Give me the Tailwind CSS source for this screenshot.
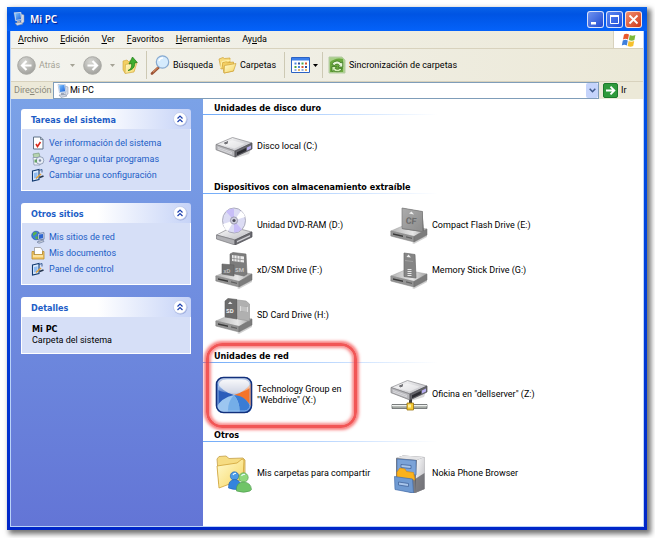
<!DOCTYPE html>
<html lang="es">
  <head>
    <meta charset="UTF-8" />
    <meta name="viewport" content="width=device-width, initial-scale=1.0" />
    <title>Mi PC</title>
    <script src="https://cdn.jsdelivr.net/npm/@tailwindcss/browser@4"></script>
  </head>
  <body class="bg-white font-['Roboto','Liberation_Sans',sans-serif] text-[9px] leading-[11px] text-black">
    <!-- Shared gradients and shapes -->
    <svg class="absolute" width="0" height="0" aria-hidden="true">
      <defs>
        <linearGradient id="metal" x1="0" y1="0" x2="1" y2="1">
          <stop offset="0" stop-color="#ffffff" />
          <stop offset="1" stop-color="#b8b8be" />
        </linearGradient>
        <linearGradient id="steel" x1="0" y1="0" x2="1" y2="0">
          <stop offset="0" stop-color="#b4b4b4" />
          <stop offset=".6" stop-color="#e6e6e6" />
          <stop offset="1" stop-color="#a0a0a0" />
        </linearGradient>
        <linearGradient id="card" x1="0" y1="0" x2="1" y2="1">
          <stop offset="0" stop-color="#acacac" />
          <stop offset="1" stop-color="#8c8c8c" />
        </linearGradient>
        <linearGradient id="folder" x1="0" y1="0" x2="1" y2="1">
          <stop offset="0" stop-color="#fffbd0" />
          <stop offset="1" stop-color="#f7d560" />
        </linearGradient>
        <linearGradient id="screen" x1="0" y1="0" x2="1" y2="1">
          <stop offset="0" stop-color="#7fc4ff" />
          <stop offset="1" stop-color="#1c62d8" />
        </linearGradient>
        <radialGradient id="grayball" cx=".4" cy=".3" r=".8">
          <stop offset="0" stop-color="#d8d8d4" />
          <stop offset="1" stop-color="#9b9b97" />
        </radialGradient>
        <symbol id="computer" viewBox="0 0 14 14">
          <path d="M9 2l3 1v7l-3 2z" fill="#d8dde8" stroke="#8a92a8" stroke-width=".5" />
          <path d="M2 .5L9 0l1 8-6.500 1z" fill="#e8f1fb" stroke="#8fa6c8" stroke-width=".5" />
          <path d="M3 1.300l5.400-.4.700 6.300-5 .8z" fill="url(#screen)" />
          <path d="M5 9h3l1 2H5z" fill="#9ca6ba" />
          <path d="M3 11l6-.5 2 1.500-6 1.500z" fill="#d5dbe6" stroke="#7b869c" stroke-width=".5" />
        </symbol>
        <symbol id="harddisk" viewBox="0 0 38 22">
          <path d="M3 14l18 7 15-8-2 5-13 4z" fill="#000" opacity=".15" />
          <path d="M1 8.500L17.500 1.500 37 7 20 15z" fill="url(#metal)" stroke="#88888c" stroke-width=".7" />
          <path d="M1 8.500v5.200L20 21v-6z" fill="#b8b8bc" stroke="#7c7c80" stroke-width=".7" />
          <path d="M20 15v6l17-8V7z" fill="#66666c" stroke="#4c4c52" stroke-width=".7" />
          <path d="M22 16.200v3l9-4.200v-3z" fill="#2c2c32" />
          <path d="M32 11.400v3.200l4-2V9.500z" fill="#b8aef2" />
          <path d="M6 8.800l11-4.600 13 3.600-10.500 4.600z" fill="#fff" opacity=".45" />
          <path d="M9 7.300l4-1.700M10 8l3-1.300" stroke="#44444a" stroke-width=".9" />
          <path d="M3 11.500l14 5M3 13l14 5" stroke="#ededf0" stroke-width=".6" />
        </symbol>
        <symbol id="reader" viewBox="0 0 38 20">
          <path d="M22 19l15-8v2l-13 7z" fill="#000" opacity=".18" />
          <path d="M.8 7L15 1l22 4-13 7.500z" fill="url(#steel)" stroke="#a0a0a0" stroke-width=".5" />
          <path d="M.8 7v5L24 18v-5.500z" fill="#949494" stroke="#7c7c7c" stroke-width=".5" />
          <path d="M24 12.500V18l13-7V5z" fill="#7c7c7c" stroke="#6a6a6a" stroke-width=".5" />
          <path d="M3 9.200l10 2.300v1.600L3 10.800z" fill="#3a3a3a" />
          <path d="M16 12.300l6 1.400v1.200l-6-1.400z" fill="#606060" />
        </symbol>
        <symbol id="panelicon" viewBox="0 0 14 14">
          <path d="M1.500 3L8 1.500v10L1.500 13z" fill="#dcecff" stroke="#123a70" stroke-width="1.100" />
          <path d="M3 5l3.500-.7v5.500L3 10.600z" fill="#8fbcf2" />
          <path d="M8 2.500l3-1v3" fill="none" stroke="#3b5f94" />
          <path d="M5 10.500L10 6" stroke="#e3a43b" stroke-width="1.500" />
          <path d="M8.500 9.500l4-1.500" stroke="#27374f" stroke-width="1.800" />
        </symbol>
        <symbol id="chevrons" viewBox="0 0 16 16">
          <circle cx="8.500" cy="8.600" r="7" fill="#6a7fc0" opacity=".45" />
          <circle cx="8" cy="8" r="6.500" fill="#fff" stroke="#c3cdea" stroke-width=".7" />
          <path d="M5.500 7.500L8 5l2.500 2.500M5.500 11L8 8.500l2.500 2.500" fill="none" stroke="#1b3fae" stroke-width="1.200" />
        </symbol>
        <symbol id="caret" viewBox="0 0 5 3">
          <path d="M0 0h5L2.500 3z" fill="currentColor" />
        </symbol>
      </defs>
    </svg>

    <div class="flex min-h-screen pt-[7px] pr-2 pb-2 pl-[7px]">
      <div class="flex flex-1 flex-col bg-linear-to-b from-[#0058ee] to-[#0026c8] shadow-[3px_3px_5px_1px_rgba(0,0,0,0.55)]">
        <!-- Title bar -->
        <header class="flex h-6 items-center gap-1 bg-linear-to-b from-[#0b62e8] from-0% via-[#0054e3] via-30% to-[#0462fa] px-[5px]">
          <svg class="size-3.5"><use href="#computer" /></svg>
          <h1 class="flex-1 font-['Noto_Sans'] text-[10px] leading-4 font-semibold text-white [text-shadow:1px_1px_1px_#0a1883]">Mi PC</h1>
          <div class="flex gap-0.5">
            <button aria-label="Minimizar" class="flex size-[17px] items-center justify-center rounded-[3px] border border-white/80 bg-linear-to-br from-[#6f92f0] to-[#2147cf]">
              <svg class="size-[15px]" viewBox="0 0 15 15"><path d="M3 10h5v2.500H3z" fill="#fff" /></svg>
            </button>
            <button aria-label="Maximizar" class="flex size-[17px] items-center justify-center rounded-[3px] border border-white/80 bg-linear-to-br from-[#5d87f0] to-[#1d4ad8]">
              <svg class="size-[15px]" viewBox="0 0 15 15"><path d="M3.500 4.500h8v7h-8z" fill="none" stroke="#fff" /><path d="M3 3h9v2H3z" fill="#fff" /></svg>
            </button>
            <button aria-label="Cerrar" class="flex size-[17px] items-center justify-center rounded-[3px] border border-white/80 bg-linear-to-br from-[#f08c6c] to-[#cf3310]">
              <svg class="size-[15px]" viewBox="0 0 15 15"><path d="M3.500 3.500l8 8M11.500 3.500l-8 8" stroke="#fff" stroke-width="1.800" /></svg>
            </button>
          </div>
        </header>

        <div class="mx-[3px] mb-[3px] flex flex-1 flex-col border border-t-0 border-[#b9d2f8] bg-white">
          <!-- Menu bar -->
          <nav class="flex h-[18px] border-b border-[#d8d2bd] bg-linear-to-r from-[#f3f3ee] to-[#ece9d8] pl-px">
            <div class="flex flex-1 items-center">
              <button class="px-1.5"><u>A</u>rchivo</button>
              <button class="px-1.5"><u>E</u>dición</button>
              <button class="px-1.5"><u>V</u>er</button>
              <button class="px-1.5"><u>F</u>avoritos</button>
              <button class="px-1.5"><u>H</u>erramientas</button>
              <button class="px-1.5">Ay<u>u</u>da</button>
            </div>
            <div class="flex w-[30px] items-center justify-center border-l border-[#d8d2bd] bg-white">
              <svg class="size-4" viewBox="0 0 16 16">
                <path d="M3 2.500q2.500-1.500 5 0L7 7.500q-2.500-1.300-5 0z" fill="#e8582c" />
                <path d="M8.800 3q2.700 1.300 5.600 0l-1 5q-2.700 1.300-5.600 0z" fill="#7db83a" />
                <path d="M1.800 8.500q2.500-1.300 5 0l-1 5q-2.500-1.500-5 0z" fill="#3f7fdd" />
                <path d="M7.600 9q2.700 1.300 5.600 0l-1 5q-2.700 1.300-5.600 0z" fill="#f6c02c" />
              </svg>
            </div>
          </nav>

          <!-- Toolbar -->
          <div class="flex h-[33px] items-center border-b border-[#d8d2bd] bg-linear-to-r from-[#f3f3ee] to-[#ece9d8] pl-[6px]" role="toolbar">
            <button class="flex w-[66px] items-center gap-[3px] text-[#a5a396]" disabled>
              <svg class="size-[19px]" viewBox="0 0 19 19">
                <circle cx="9.500" cy="9.500" r="8.800" fill="url(#grayball)" stroke="#a9a9a4" />
                <path d="M14.500 9.500H6M9.500 5l-4.500 4.500L9.500 14" fill="none" stroke="#fff" stroke-width="2.200" />
              </svg>
              <span class="flex-1 text-left">Atrás</span>
              <svg class="mr-2 h-[3px] w-[5px]"><use href="#caret" /></svg>
            </button>
            <button class="flex w-[39px] items-center gap-2 text-[#a5a396]" disabled aria-label="Adelante">
              <svg class="size-[19px]" viewBox="0 0 19 19">
                <circle cx="9.500" cy="9.500" r="8.800" fill="url(#grayball)" stroke="#a9a9a4" />
                <path d="M4.500 9.500H13M9.500 5l4.500 4.500L9.500 14" fill="none" stroke="#fff" stroke-width="2.200" />
              </svg>
              <svg class="h-[3px] w-[5px]"><use href="#caret" /></svg>
            </button>
            <button class="w-6" aria-label="Arriba">
              <svg class="h-[18px] w-4" viewBox="0 0 16 18">
                <path d="M1 5l4-1 1.500 1.500L12 4v11l-9 2-2-3z" fill="#f3cf63" stroke="#cfa236" stroke-width=".6" />
                <path d="M3.500 8.500L15 6.500 12 16 3 17.500z" fill="url(#folder)" stroke="#cfa236" stroke-width=".6" />
                <path d="M6 14.500c3-1 4-3.500 3.600-7L7 8l3.500-7 4.800 5.500-2.600.4c.3 4-2 7.200-6.700 7.600z" fill="#3fae2f" stroke="#1c7a17" stroke-width=".7" />
              </svg>
            </button>
            <button class="flex w-[69px] items-center gap-[3px] border-l border-[#cdc9b4] pl-[3px]">
              <svg class="my-1 size-5" viewBox="0 0 20 20">
                <path d="M8.500 12.500L2 18.500" stroke="#9a5236" stroke-width="2.600" stroke-linecap="round" />
                <path d="M8 12.500l-5 4.700" stroke="#e79a66" stroke-width="1" />
                <circle cx="12.500" cy="7" r="6.200" fill="#d5ebfd" stroke="#86a9d0" stroke-width="1.200" />
                <path d="M9 6a4 4 0 0 1 4-3" fill="none" stroke="#fff" stroke-width="1.500" />
              </svg>
              <span>Búsqueda</span>
            </button>
            <button class="flex w-[69px] items-center gap-[3px] pl-[3px]">
              <svg class="h-[18px] w-[19px]" viewBox="0 0 19 18">
                <path d="M1 3l4-1.500 1.500 1L12 2v9l-9 2z" fill="#f7da7c" stroke="#cfa236" stroke-width=".7" />
                <path d="M4 7l4-1.500 1.500 1.200 6-.7v9L6 17z" fill="#f3cf63" stroke="#cfa236" stroke-width=".7" />
                <path d="M6.500 9.500L18 7.500 15.500 15 6 17z" fill="url(#folder)" stroke="#cfa236" stroke-width=".7" />
                <path d="M2.500 12L4 5.500l9-1.500" fill="none" stroke="#fff3ae" />
              </svg>
              <span>Carpetas</span>
            </button>
            <button class="flex w-[38px] items-center gap-[3px] border-l border-[#cdc9b4] pl-1.5" aria-label="Vistas">
              <svg class="my-[5px] h-4 w-[19px]" viewBox="0 0 19 16">
                <path d="M.5.500h18v15H.500z" fill="#fff" stroke="#2b62c4" />
                <path d="M1 1h17v2.500H1z" fill="#3d80ea" />
                <path d="M3.500 5.500h2v2h-2zM7 9h2v2H7z" fill="#4a86dc" />
                <path d="M7 5.500h2v2H7zM14 9h2v2h-2z" fill="#2a4f9e" />
                <path d="M10.500 5.500h2v2h-2zM3.500 9h2v2h-2z" fill="#4aa346" />
                <path d="M14 5.500h2v2h-2zM10.500 9h2v2h-2z" fill="#d8532f" />
                <path d="M3.500 12.300h2v1.500h-2zM10.500 12.300h2v1.500h-2z" fill="#6c92d6" />
                <path d="M7 12.300h2v1.500H7zM14 12.300h2v1.500h-2z" fill="#dd9a34" />
              </svg>
              <svg class="h-[3px] w-[5px]"><use href="#caret" /></svg>
            </button>
            <button class="flex items-center gap-[3px] border-l border-[#cdc9b4] pl-[5px]">
              <svg class="my-1 size-[18px]" viewBox="0 0 18 18">
                <path d="M1 1h13l3 3v13H1z" fill="#a9cf88" stroke="#b6cda4" />
                <path d="M2 6q6-5 13-3v13H2z" fill="#6aa83e" />
                <path d="M4 8.500a5.300 5.300 0 0 1 9-1.500l1.700-1v5h-4.500l1.400-1.500a3 3 0 0 0-5-.2z" fill="#e9f7da" stroke="#2f6a17" stroke-width=".7" />
                <path d="M14.200 12.500a5.300 5.300 0 0 1-8.700 1.700L4 15.500v-5h4.600l-1.500 1.700a3 3 0 0 0 4.500.2z" fill="#d4efb6" stroke="#2f6a17" stroke-width=".7" />
              </svg>
              <span>Sincronización de carpetas</span>
            </button>
          </div>

          <!-- Address bar -->
          <form class="flex h-[17px] items-center bg-[#ece9d8] pl-[3px]">
            <label for="address" class="w-[39px] text-[#8b897c]">Dire<u>c</u>ción</label>
            <div class="flex h-full flex-1 items-center border border-[#7f9db9] bg-white pl-[2px]">
              <svg class="size-3.5"><use href="#computer" /></svg>
              <input id="address" type="text" value="Mi PC" class="min-w-0 flex-1 outline-none" />
              <button type="button" aria-label="Mostrar direcciones" class="flex h-full w-3 items-center justify-center rounded-xs bg-[#c5d4fb] text-[#3f5a8c]">
                <svg class="h-[5px] w-[7px]" viewBox="0 0 7 5"><path d="M.7.700l2.800 3 2.800-3" fill="none" stroke="currentColor" stroke-width="1.500" /></svg>
              </button>
            </div>
            <button type="button" class="flex w-11 items-center gap-[3px] pl-1">
              <svg class="size-[15px]" viewBox="0 0 15 15">
                <rect x=".5" y=".5" width="14" height="14" rx="1.500" fill="#2f9a3c" stroke="#1d7a2c" />
                <path d="M3 7.500h8M7.500 3.700l3.800 3.800-3.800 3.800" fill="none" stroke="#fff" stroke-width="1.900" />
              </svg>
              <span>Ir</span>
            </button>
          </form>

          <div class="flex flex-1">
            <!-- Task pane -->
            <aside class="flex w-[192px] flex-col gap-3 bg-linear-to-b from-[#7ba2e7] to-[#6375d6] pt-[10px] pr-3 pl-[10px] text-[#215dc6]">
              <section>
                <h2 class="flex h-5 items-center rounded-t-[3px] bg-linear-to-r from-white from-45% to-[#c6d3f7] pr-[3px] pl-[10px] font-['DejaVu_Sans_Condensed'] font-bold">
                  <span class="flex-1 pt-0.5">Tareas del sistema</span>
                  <button aria-label="Contraer Tareas del sistema"><svg class="size-4"><use href="#chevrons" /></svg></button>
                </h2>
                <ul class="border border-t-0 border-white bg-[#d6dff7] pt-1.5 pb-[7px] pl-[9px] leading-4">
                  <li>
                    <a href="#" class="flex items-center gap-1">
                      <svg class="size-3.5" viewBox="0 0 14 14">
                        <path d="M2.500 1h7l2.500 2.500v9.500H2.500z" fill="#fff" stroke="#5f7186" />
                        <path d="M9.500 1v2.500H12" fill="none" stroke="#5f7186" stroke-width=".8" />
                        <path d="M5 8l1.500 2.500 3-4.500" fill="none" stroke="#d62a1e" stroke-width="1.600" />
                      </svg>
                      Ver información del sistema
                    </a>
                  </li>
                  <li>
                    <a href="#" class="flex items-center gap-1">
                      <svg class="size-3.5" viewBox="0 0 14 14">
                        <path d="M2 2l6-1 1 4-6 1z" fill="#b7d4b0" stroke="#6f9273" stroke-width=".6" />
                        <path d="M2 5.500h7v7.500H3z" fill="#f2f5fa" stroke="#7f8da8" stroke-width=".7" />
                        <circle cx="9" cy="8.500" r="3.800" fill="#e8edf6" stroke="#8290ab" stroke-width=".8" />
                        <circle cx="9" cy="8.500" r="1.200" fill="#7d8aa6" />
                        <path d="M3.500 7.500h2.500v3H3.500z" fill="#66a366" />
                      </svg>
                      Agregar o quitar programas
                    </a>
                  </li>
                  <li>
                    <a href="#" class="flex items-center gap-1">
                      <svg class="size-3.5"><use href="#panelicon" /></svg>
                      Cambiar una configuración
                    </a>
                  </li>
                </ul>
              </section>

              <section>
                <h2 class="flex h-5 items-center rounded-t-[3px] bg-linear-to-r from-white from-45% to-[#c6d3f7] pr-[3px] pl-[10px] font-['DejaVu_Sans_Condensed'] font-bold">
                  <span class="flex-1 pt-0.5">Otros sitios</span>
                  <button aria-label="Contraer Otros sitios"><svg class="size-4"><use href="#chevrons" /></svg></button>
                </h2>
                <ul class="border border-t-0 border-white bg-[#d6dff7] pt-1.5 pb-[7px] pl-[9px] leading-4">
                  <li>
                    <a href="#" class="flex items-center gap-1">
                      <svg class="size-3.5" viewBox="0 0 14 14">
                        <circle cx="5" cy="5.500" r="4.300" fill="#3b80d6" stroke="#1d4f96" stroke-width=".6" />
                        <path d="M2 3q3-2 4 0L4 5 2 6zM4 7l3-1v3H5z" fill="#58b34b" />
                        <path d="M7 3.500l6-.8v6.500l-6 .8z" fill="#dfe9f8" stroke="#4b5f86" stroke-width=".7" />
                        <path d="M8 4.500l4-.6v4.400l-4 .6z" fill="#2f66cf" />
                        <path d="M6 12l6-2 1 1.500-5 1.800z" fill="#c9cfdb" stroke="#4b5f86" stroke-width=".5" />
                      </svg>
                      Mis sitios de red
                    </a>
                  </li>
                  <li>
                    <a href="#" class="flex items-center gap-1">
                      <svg class="size-3.5" viewBox="0 0 14 14">
                        <path d="M3.500 1.500h6L11.500 4v6h-8z" fill="#fff" stroke="#8c8c8c" stroke-width=".7" />
                        <path d="M1 5.500h2v3h8.500v-3H13V13H1z" fill="#f6cb6a" stroke="#b88a2c" stroke-width=".8" />
                        <path d="M2 10h10" stroke="#fdf0c0" stroke-width="1.200" />
                      </svg>
                      Mis documentos
                    </a>
                  </li>
                  <li>
                    <a href="#" class="flex items-center gap-1">
                      <svg class="size-3.5"><use href="#panelicon" /></svg>
                      Panel de control
                    </a>
                  </li>
                </ul>
              </section>

              <section>
                <h2 class="flex h-5 items-center rounded-t-[3px] bg-linear-to-r from-white from-45% to-[#c6d3f7] pr-[3px] pl-[10px] font-['DejaVu_Sans_Condensed'] font-bold">
                  <span class="flex-1 pt-0.5">Detalles</span>
                  <button aria-label="Contraer Detalles"><svg class="size-4"><use href="#chevrons" /></svg></button>
                </h2>
                <div class="border border-t-0 border-white bg-[#d6dff7] pt-[7px] pb-[7px] pl-[10px] text-black">
                  <p class="font-['DejaVu_Sans_Condensed'] font-bold">Mi PC</p>
                  <p>Carpeta del sistema</p>
                </div>
              </section>
            </aside>

            <!-- Drives and folders -->
            <main class="flex flex-1 flex-col gap-3 pt-[3px]">
              <section>
                <h2 class="pl-[11px] font-['DejaVu_Sans_Condensed'] leading-3 font-bold">Unidades de disco duro</h2>
                <div class="h-px w-[235px] bg-linear-to-r from-[#70aaf8] to-white"></div>
                <div class="grid grid-cols-[175px_175px] pt-[9px] pl-3">
                  <a href="#" class="flex h-[45px] items-center gap-1">
                    <svg class="h-[38px] w-[38px]" viewBox="0 0 38 38"><use href="#harddisk" y="8" width="38" height="22" /></svg>
                    Disco local (C:)
                  </a>
                </div>
              </section>

              <section>
                <h2 class="pl-[11px] font-['DejaVu_Sans_Condensed'] leading-3 font-bold">Dispositivos con almacenamiento extraíble</h2>
                <div class="h-px w-[235px] bg-linear-to-r from-[#70aaf8] to-white"></div>
                <div class="grid grid-cols-[175px_175px] pt-[9px] pl-3">
                  <a href="#" class="flex h-[45px] items-center gap-1">
                    <svg class="h-[38px] w-[38px]" viewBox="0 0 38 38">
                      <path d="M1.500 28L17 20l20 5-17 8z" fill="url(#metal)" stroke="#88888c" stroke-width=".7" />
                      <path d="M1.500 28v4L20 38v-5z" fill="#b0b0b4" stroke="#77777b" stroke-width=".7" />
                      <path d="M20 33v5l17-8v-5z" fill="#6c6c72" stroke="#4c4c52" stroke-width=".7" />
                      <path d="M22 34l13-6v1.500l-13 6z" fill="#d0d0d4" />
                      <ellipse cx="19" cy="13.500" rx="11.500" ry="12.500" fill="#dcdcf4" stroke="#9a9aac" stroke-width=".8" />
                      <path d="M19 13.500L11 4.500Q14 1.500 19 1.500zM19 13.500l8 9q-3.500 3-8 3z" fill="#c8bef8" />
                      <path d="M19 13.500L8 17q2 6 5 7zM19 13.500L30 10q-1-4-4-6z" fill="#fff" />
                      <circle cx="19" cy="13.500" r="3.600" fill="#cfcfdf" stroke="#8a8a9c" stroke-width=".7" />
                      <circle cx="19" cy="13.500" r="1.600" fill="#4c4c5a" />
                    </svg>
                    Unidad DVD-RAM (D:)
                  </a>
                  <a href="#" class="flex h-[45px] items-center gap-1">
                    <svg class="h-[38px] w-[38px]" viewBox="0 0 38 38">
                      <use href="#reader" y="17" width="38" height="20" />
                      <path d="M12 1l20.500 3.500L34 24l-2 1-20-3z" fill="#707070" />
                      <path d="M12 1l20.500 3.500v20L12 21.500z" fill="url(#card)" stroke="#7c7c7c" stroke-width=".7" />
                      <path d="M19 6.500l2.500-2 2.500 3z" fill="#f0f0f0" />
                      <text x="15.500" y="16.500" transform="rotate(5 16 16)" font-size="9" font-weight="bold" fill="#6c6c6c">CF</text>
                    </svg>
                    Compact Flash Drive (E:)
                  </a>
                  <a href="#" class="flex h-[45px] items-center gap-1">
                    <svg class="h-[38px] w-[38px]" viewBox="0 0 38 38">
                      <use href="#reader" y="17" width="38" height="20" />
                      <path d="M15 2l3-1.500L31 2l1 20-3 2-14-3z" fill="#7c7c7c" stroke="#6a6a6a" stroke-width=".6" />
                      <path d="M17 3l12 1.500v6L17 9z" fill="#ececec" />
                      <path d="M19 3v7M22 3.500v7M25 4v7M17 6.300l12 1.500" stroke="#8a8a8a" stroke-width=".8" />
                      <text x="20" y="20" font-size="6" font-weight="bold" fill="#c4c4c4">SM</text>
                      <path d="M7 12l12 1v11L7 22z" fill="#707070" stroke="#606060" stroke-width=".6" />
                      <text x="8.500" y="20.500" font-size="6" font-weight="bold" fill="#b8b8b8">xD</text>
                    </svg>
                    xD/SM Drive (F:)
                  </a>
                  <a href="#" class="flex h-[45px] items-center gap-1">
                    <svg class="h-[38px] w-[38px]" viewBox="0 0 38 38">
                      <use href="#reader" y="17" width="38" height="20" />
                      <path d="M14 1l11 1.500 1 23.500-12-1.500z" fill="#858585" stroke="#6c6c6c" stroke-width=".7" />
                      <path d="M16.500 5l2-2.500L21 5.500z" fill="#f0f0f0" />
                      <path d="M15 8.500l8 1" stroke="#a8a8a8" stroke-width=".8" />
                      <path d="M17.500 17.500h4M17.500 19.500h4M17.500 21.500h4M17.500 23.500h4" stroke="#e8e8e8" stroke-width="1.200" />
                    </svg>
                    Memory Stick Drive (G:)
                  </a>
                  <a href="#" class="flex h-[45px] items-center gap-1">
                    <svg class="h-[38px] w-[38px]" viewBox="0 0 38 38">
                      <use href="#reader" y="17" width="38" height="20" />
                      <path d="M10 4l3-2.500 9 1V22l-12-2z" fill="#6c6c6c" stroke="#5c5c5c" stroke-width=".6" />
                      <path d="M13 7l2-2.500L17.500 7z" fill="#e8e8e8" />
                      <text x="11" y="15.500" font-size="6" font-weight="bold" fill="#f0f0f0">SD</text>
                      <path d="M22.500 3L31 4l3.500 3v17l-12-2z" fill="#b0b0b0" stroke="#949494" stroke-width=".6" />
                      <path d="M25 9l8 1v5l-8-1z" fill="#dcdcdc" />
                      <path d="M27 9v6M29 9v6M31 9v6" stroke="#8c8c8c" stroke-width=".7" />
                    </svg>
                    SD Card Drive (H:)
                  </a>
                </div>
              </section>

              <section class="relative">
                <h2 class="pl-[11px] font-['DejaVu_Sans_Condensed'] leading-3 font-bold">Unidades de red</h2>
                <div class="h-px w-[235px] bg-linear-to-r from-[#70aaf8] to-white"></div>
                <div class="grid grid-cols-[175px_175px] pt-[9px] pl-3">
                  <a href="#" class="flex h-[45px] items-center gap-1">
                    <svg class="h-[38px] w-[38px]" viewBox="0 0 38 38">
                      <defs>
                        <clipPath id="tile"><rect x="1" y="1" width="36" height="36" rx="7" /></clipPath>
                        <linearGradient id="tileshine" x1="0" y1="0" x2="0" y2="1">
                          <stop offset="0" stop-color="#fff" stop-opacity=".9" />
                          <stop offset="1" stop-color="#fff" stop-opacity=".25" />
                        </linearGradient>
                      </defs>
                      <!-- Four petals meeting in the middle -->
                      <g clip-path="url(#tile)">
                        <path d="M0 0h38v38H0z" fill="#9cc6f0" />
                        <path d="M0 0h38Q32 16 19 19 6 16 0 0z" fill="#c2c8dc" />
                        <path d="M38 4v30Q33 22 19 19 31 16 38 4z" fill="#f4742a" />
                        <path d="M0 4v30Q5 22 19 19 7 16 0 4z" fill="#2a5cba" />
                        <path d="M19 19Q34 20 38 38H24Q26 28 19 19z" fill="#3a7cd4" />
                        <path d="M19 19Q12 26 13 38h11Q26 28 19 19z" fill="#74aee8" />
                        <path d="M3 14Q2 4 12 3h15q9 1 8 9-7 5-16 5-11 0-16-3z" fill="url(#tileshine)" />
                      </g>
                      <rect x="1.500" y="1.500" width="35" height="35" rx="7" fill="none" stroke="#12307c" stroke-width="1.600" />
                      <rect x="3" y="3" width="32" height="32" rx="5.500" fill="none" stroke="#a8c8f4" stroke-width=".7" />
                    </svg>
                    <span>Technology Group en<br />"Webdrive" (X:)</span>
                  </a>
                  <a href="#" class="flex h-[45px] items-center gap-1">
                    <svg class="h-[38px] w-[38px]" viewBox="0 0 38 38">
                      <path d="M19 20h3v8h-3z" fill="#3c3c42" />
                      <use href="#harddisk" y="3" width="38" height="22" />
                      <path d="M2 28.500h35v4H2z" fill="#a4a9a4" stroke="#55585a" stroke-width=".7" />
                      <path d="M2 29.700h35" stroke="#f0f2f0" stroke-width="1.200" />
                      <path d="M17 27h6.500v7H17z" fill="#f4c832" stroke="#9a7412" stroke-width=".8" />
                      <path d="M18 28.500h3v3h-3z" fill="#fdeea0" />
                    </svg>
                    Oficina en "dellserver" (Z:)
                  </a>
                </div>
                <!-- Highlight ring -->
                <div class="pointer-events-none absolute -top-[7px] left-[3px] h-[85px] w-[151px] rounded-[16px] border-3 border-[#f04444]/90 shadow-[0_0_3px_2px_rgba(245,80,80,0.75),inset_0_0_3px_2px_rgba(245,80,80,0.65)]"></div>
              </section>

              <section>
                <h2 class="pl-[11px] font-['DejaVu_Sans_Condensed'] leading-3 font-bold">Otros</h2>
                <div class="h-px w-[235px] bg-linear-to-r from-[#70aaf8] to-white"></div>
                <div class="grid grid-cols-[175px_175px] pt-[9px] pl-3">
                  <a href="#" class="flex h-[45px] items-center gap-1">
                    <svg class="h-[38px] w-[38px]" viewBox="0 0 38 38">
                      <path d="M2 4l2-2.500L11 1l3 2.500 14-.5 2 2v18L4 29z" fill="#f6dc82" stroke="#c4a04a" stroke-width=".8" />
                      <path d="M2 11l20-3 5-4 2 1-1 19L4 33z" fill="url(#folder)" stroke="#cfa236" stroke-width=".8" />
                      <circle cx="19.500" cy="21" r="4.200" fill="#4c9ae6" stroke="#1c5fae" stroke-width=".6" />
                      <path d="M13.500 33q-.5-8 6-8.500 5 0 6 5v4.500q-6 1.500-12-1z" fill="#3484de" stroke="#1c5fae" stroke-width=".6" />
                      <circle cx="28.500" cy="22.500" r="4.700" fill="#8fd87c" stroke="#4c984c" stroke-width=".6" />
                      <path d="M21.500 36q-1-8.500 7-9 7.500.5 8 7.500l-1.500 1.500q-6 2.500-13.500 0z" fill="#70c468" stroke="#4c984c" stroke-width=".6" />
                      <path d="M18 20q1-2 3-1.500M26.500 21q1-2 3.500-1.500" fill="none" stroke="#e4f8ff" stroke-width="1.200" />
                    </svg>
                    Mis carpetas para compartir
                  </a>
                  <a href="#" class="flex h-[45px] items-center gap-1">
                    <svg class="h-[38px] w-[38px]" viewBox="0 0 38 38">
                      <path d="M6 3l7-2.500L34.500 2v32L24 38.500 6 34z" fill="#7c7c80" />
                      <path d="M6 3l7-2.500L34.500 2 27 5z" fill="#e4e4e6" />
                      <path d="M27 5l7.500-3v32L25 38z" fill="url(#metal)" />
                      <path d="M34.500 18v16L25 38V24z" fill="#4a4a50" opacity=".65" />
                      <path d="M7 4l19 1.500V20L7 17z" fill="#7ba3d8" stroke="#4a74b0" stroke-width=".7" />
                      <path d="M11 9.500l10 1v3l-10-1z" fill="#a9c6ec" stroke="#41659c" stroke-width=".8" />
                      <path d="M7 17l3-4 5 1 1.500 2.500 7 1L25 25 7 23z" fill="#fbb21c" stroke="#d98a0a" stroke-width=".6" />
                      <path d="M4.500 21.500L22.500 24l1 14L5 34.500z" fill="#6f9ad2" stroke="#456fac" stroke-width=".7" />
                      <path d="M8.500 27l10 1.500v3l-10-1.500z" fill="#a9c6ec" stroke="#41659c" stroke-width=".8" />
                    </svg>
                    Nokia Phone Browser
                  </a>
                </div>
              </section>
            </main>
          </div>
        </div>
      </div>
    </div>
  </body>
</html>
